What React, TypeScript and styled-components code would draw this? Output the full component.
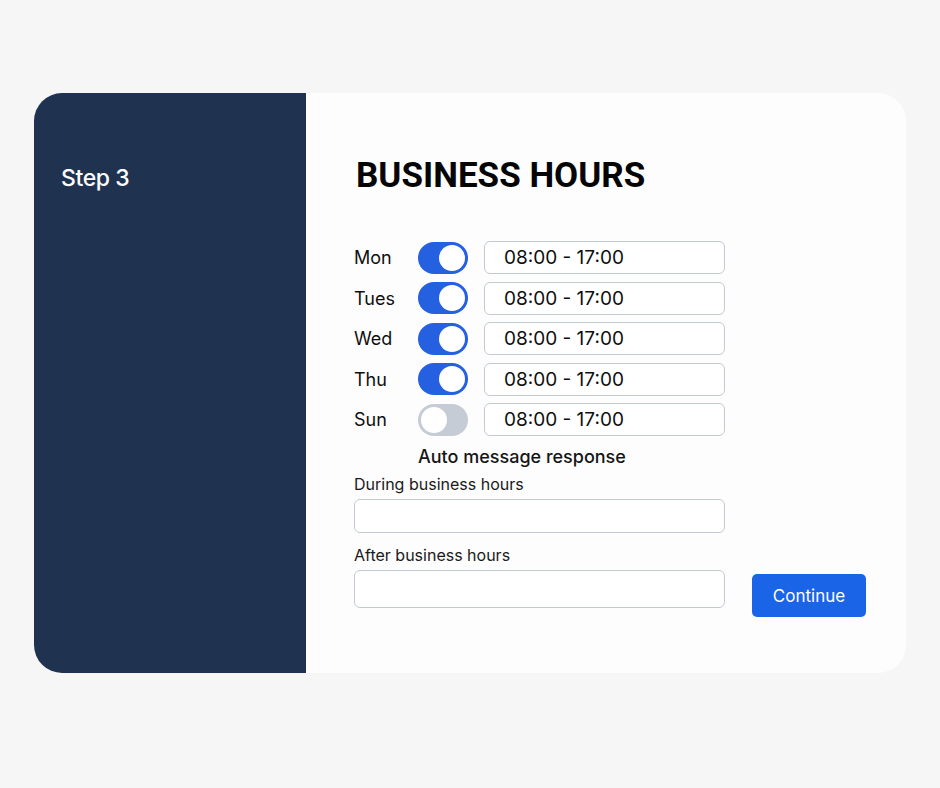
import React, { useState } from 'react';
import styled, { createGlobalStyle } from 'styled-components';

const GlobalStyle = createGlobalStyle`
  html, body {
    margin: 0;
    padding: 0;
    background: #f6f6f6;
  }
  body {
    font-family: Inter, 'Noto Sans', 'Liberation Sans', sans-serif;
    color: #111;
  }
  * {
    box-sizing: border-box;
  }
`;

interface DayHours {
  day: string;
  open: boolean;
  hours: string;
}

const initialDays: DayHours[] = [
  { day: 'Mon', open: true, hours: '08:00 - 17:00' },
  { day: 'Tues', open: true, hours: '08:00 - 17:00' },
  { day: 'Wed', open: true, hours: '08:00 - 17:00' },
  { day: 'Thu', open: true, hours: '08:00 - 17:00' },
  { day: 'Sun', open: false, hours: '08:00 - 17:00' },
];

const App: React.FC = () => {
  const [days, setDays] = useState(initialDays);

  const toggleDay = (index: number) => {
    setDays((prev) =>
      prev.map((d, i) => (i === index ? { ...d, open: !d.open } : d)),
    );
  };

  return (
    <>
      <GlobalStyle />
      <Page>
        <Card>
          <Sidebar>
            <StepLabel>Step 3</StepLabel>
          </Sidebar>
          <Content>
            <Title>BUSINESS HOURS</Title>
            <DayList>
              {days.map((d, i) => (
                <DayRow key={d.day}>
                  <DayName>{d.day}</DayName>
                  <Toggle
                    type='button'
                    $on={d.open}
                    aria-pressed={d.open}
                    onClick={() => toggleDay(i)}
                  >
                    <Knob $on={d.open} />
                  </Toggle>
                  <HoursBox>{d.hours}</HoursBox>
                </DayRow>
              ))}
            </DayList>
            <SectionHeading>Auto message response</SectionHeading>
            <FieldLabel>During business hours</FieldLabel>
            <TextField $height={34} />
            <FieldLabel $spaced>After business hours</FieldLabel>
            <BottomRow>
              <TextField $height={38} />
              <ContinueButton type='button'>Continue</ContinueButton>
            </BottomRow>
          </Content>
        </Card>
      </Page>
    </>
  );
};

const Page = styled.div`
  min-height: 788px;
  padding: 93px 34px 0 34px;
`;

const Card = styled.div`
  width: 872px;
  height: 580px;
  display: grid;
  grid-template-columns: 272px 1fr;
  border-radius: 28px;
  overflow: hidden;
  background: #fdfdfd;
`;

const Sidebar = styled.aside`
  background: #1f3350;
  padding: 71px 27px 0;
`;

const StepLabel = styled.div`
  color: #ffffff;
  font-size: 23px;
  font-weight: 500;
  line-height: 28px;
  letter-spacing: -0.4px;
`;

const Content = styled.section`
  padding: 62px 40px 0 48px;
  display: flex;
  flex-direction: column;
`;

const Title = styled.h1`
  margin: 0 0 0 2px;
  font-family: Roboto, 'Liberation Sans', sans-serif;
  font-weight: 700;
  font-size: 35px;
  line-height: 42px;
  color: #050505;
`;

const DayList = styled.div`
  margin-top: 44px;
  display: flex;
  flex-direction: column;
  gap: 7.5px;
`;

const DayRow = styled.div`
  display: flex;
  align-items: center;
  height: 33px;
`;

const DayName = styled.span`
  width: 64px;
  font-size: 18px;
  color: #0f0f0f;
`;

const Toggle = styled.button<{ $on: boolean }>`
  width: 50px;
  height: 32px;
  padding: 0;
  border: none;
  border-radius: 16px;
  background: ${({ $on }) => ($on ? '#2460e0' : '#c6ccd5')};
  position: relative;
  cursor: pointer;
  flex-shrink: 0;
`;

const Knob = styled.span<{ $on: boolean }>`
  position: absolute;
  top: 3px;
  left: ${({ $on }) => ($on ? '21px' : '3px')};
  width: 26px;
  height: 26px;
  border-radius: 50%;
  background: #ffffff;
  transition: left 0.15s ease;
`;

const HoursBox = styled.div`
  margin-left: 16px;
  width: 241px;
  height: 33px;
  border: 1px solid #c4cad3;
  border-radius: 6px;
  background: #ffffff;
  padding-left: 19px;
  display: flex;
  align-items: center;
  font-size: 19px;
  color: #0f0f0f;
`;

const SectionHeading = styled.div`
  margin: 9px 0 0 64px;
  font-size: 18px;
  line-height: 24px;
  font-weight: 500;
  color: #151515;
`;

const FieldLabel = styled.label<{ $spaced?: boolean }>`
  display: block;
  margin-top: ${({ $spaced }) => ($spaced ? '12px' : '5px')};
  margin-bottom: 5px;
  font-size: 16px;
  line-height: 20px;
  color: #1a1a1a;
`;

const TextField = styled.input<{ $height: number }>`
  width: 371px;
  height: ${({ $height }) => $height}px;
  border: 1px solid #c4cad3;
  border-radius: 6px;
  background: #ffffff;
  padding: 0 12px;
  font-family: inherit;
  font-size: 16px;
  outline: none;
  flex-shrink: 0;
`;

const BottomRow = styled.div`
  display: flex;
  align-items: flex-start;
  gap: 27px;
`;

const ContinueButton = styled.button`
  margin-top: 4px;
  width: 114px;
  height: 43px;
  border: none;
  border-radius: 5px;
  background: #1a64e8;
  color: #ffffff;
  font-family: inherit;
  font-size: 17px;
  cursor: pointer;
`;

export default App;
